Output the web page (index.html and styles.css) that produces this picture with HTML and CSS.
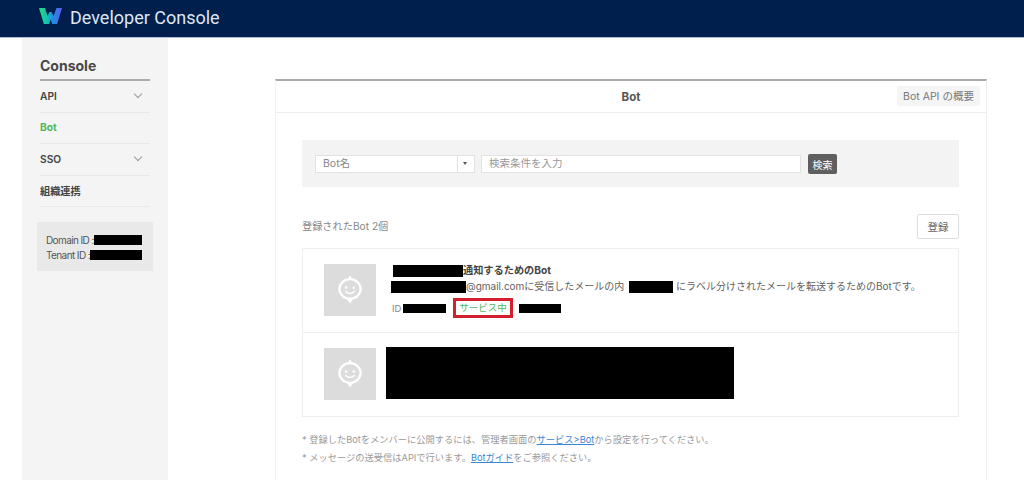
FILE: index.html
```html
<!DOCTYPE html>
<html lang="ja">
<head>
  <meta charset="UTF-8" />
  <meta name="viewport" content="width=device-width, initial-scale=1" />
  <title>Developer Console</title>
  <link rel="stylesheet" href="styles.css">
</head>
<body>
  <svg class="defs" width="0" height="0" aria-hidden="true">
    <defs>
      <linearGradient id="logo-grad" x1="0" y1="0" x2="1" y2="0">
        <stop offset="0" stop-color="#2ad97c" />
        <stop offset="0.35" stop-color="#16c0b4" />
        <stop offset="0.6" stop-color="#1f8fe6" />
        <stop offset="1" stop-color="#6257ea" />
      </linearGradient>
      <symbol id="bot-face" viewBox="0 0 26 28">
        <circle cx="13" cy="1.3" r="1.3" fill="#fff" />
        <ellipse cx="13" cy="13" rx="10.6" ry="9.8" fill="none" stroke="#fff" stroke-width="2.2" />
        <path d="M9.8 23l3.2 4.4 3.2-4.4z" fill="#fff" />
        <circle cx="9.2" cy="11.6" r="1.3" fill="#fff" />
        <circle cx="16.8" cy="11.6" r="1.3" fill="#fff" />
        <path d="M8.8 15.4c2.3 2.7 6.1 2.7 8.4 0" fill="none" stroke="#fff" stroke-width="1.5" stroke-linecap="round" />
      </symbol>
    </defs>
  </svg>

  <header class="topbar">
    <svg class="logo" viewBox="0 0 23 16.5" aria-hidden="true">
      <path d="M0 0h6l2.5 8 2-4h2l2 4L17.5 0H23l-5 16.5h-4.5l-1.8-5-1.7 5H5z" fill="url(#logo-grad)" />
    </svg>
    <span class="topbar-title">Developer Console</span>
  </header>

  <div class="layout">
    <aside class="sidebar">
      <h2 class="sidebar-title">Console</h2>
      <ul class="side-menu">
        <li class="side-item">API <span class="chevron"></span></li>
        <li class="side-item active">Bot</li>
        <li class="side-item">SSO <span class="chevron"></span></li>
        <li class="side-item">組織連携</li>
      </ul>
      <div class="id-box">
        <div class="id-line">Domain ID : <span class="mask mask-domain"></span></div>
        <div class="id-line">Tenant ID : <span class="mask mask-tenant"></span></div>
      </div>
    </aside>

    <main class="panel">
      <div class="panel-head">
        <h1 class="panel-title">Bot</h1>
        <a class="overview-link">Bot API の概要</a>
      </div>

      <div class="panel-body">
        <div class="search-box">
          <div class="select">
            <span class="select-value">Bot名</span>
            <span class="select-arrow"></span>
          </div>
          <div class="search-input">検索条件を入力</div>
          <button class="search-btn">検索</button>
        </div>

        <div class="list-head">
          <span class="count">登録されたBot 2個</span>
          <button class="register-btn">登録</button>
        </div>

        <div class="bot-list">
          <div class="bot-row">
            <div class="avatar"><svg class="bot-icon"><use href="#bot-face" /></svg></div>
            <div class="bot-info">
              <div class="bot-name"><span class="mask mask-name"></span>通知するためのBot</div>
              <div class="bot-desc"><span class="mask mask-mail"></span>@gmail.comに受信したメールの内 <span class="mask mask-label"></span> にラベル分けされたメールを転送するためのBotです。</div>
              <div class="bot-meta">
                <span class="bot-id">ID</span><span class="mask mask-id"></span>
                <span class="status">サービス中</span>
                <span class="mask mask-id2"></span>
              </div>
            </div>
          </div>
          <div class="bot-row">
            <div class="avatar"><svg class="bot-icon"><use href="#bot-face" /></svg></div>
            <div class="mask mask-block"></div>
          </div>
        </div>

        <p class="note">* 登録したBotをメンバーに公開するには、管理者画面の<a class="note-link">サービス&gt;Bot</a>から設定を行ってください。</p>
        <p class="note">* メッセージの送受信はAPIで行います。<a class="note-link">Botガイド</a>をご参照ください。</p>
      </div>
    </main>
  </div>
</body>
</html>
```

FILE: styles.css
```css
* { box-sizing: border-box; }
html, body {
  height: 100%;
  overflow: hidden;
}
body {
  margin: 0;
  font-family: 'Inter', 'Noto Sans CJK JP', sans-serif;
  background-color: #fff;
  color: #555;
  display: flex;
  flex-direction: column;
}
.defs { position: absolute; }
ul { list-style: none; margin: 0; padding: 0; }
button { font-family: inherit; }

.topbar {
  flex: none;
  height: 38px;
  padding-left: 39px;
  display: flex;
  align-items: center;
  gap: 8px;
  background-color: #001f4d;
  border-bottom: 1px solid #a9bdd8;
}
.logo { width: 23px; height: 16.5px; margin-top: -5px; }
.topbar-title {
  color: #dfe6f2;
  font-family: 'Roboto', sans-serif;
  font-size: 18px;
  margin-top: -3px;
}

.layout {
  flex: 1;
  display: flex;
  padding-left: 22px;
  min-height: 0;
}

.sidebar {
  flex: none;
  width: 146px;
  padding: 18px 18px 0 15px;
  background-color: #f4f4f4;
}
.sidebar-title {
  margin: 0 0 0 3px;
  height: 25px;
  font-size: 14px;
  line-height: 20px;
  font-weight: 700;
  color: #484848;
  border-bottom: 2px solid #aaa;
}
.side-menu { margin-left: 3px; }
.side-item {
  height: 31.5px;
  padding: 0 9px 1px 0;
  display: flex;
  align-items: center;
  justify-content: space-between;
  font-size: 10.2px;
  font-weight: 600;
  color: #444;
  border-bottom: 1px solid #e9e9e9;
}
.side-item.active { color: #4cb85c; font-weight: 700; }
.chevron {
  width: 6px;
  height: 6px;
  margin-top: -3px;
  border-right: 1px solid #999;
  border-bottom: 1px solid #999;
  transform: rotate(45deg);
}
.id-box {
  margin-top: 15px;
  width: 116px;
  height: 49px;
  padding: 10px 11px 0 9px;
  background-color: #e9e9e9;
}
.id-line {
  display: flex;
  align-items: center;
  justify-content: space-between;
  height: 15px;
  font-size: 10px;
  letter-spacing: -0.6px;
  color: #555;
  white-space: nowrap;
}

.mask { display: inline-block; background-color: #000; vertical-align: middle; }
.mask-domain { width: 49px; height: 10px; }
.mask-tenant { width: 52px; height: 10px; }
.mask-name { width: 70px; height: 12px; margin-left: 1px; }
.mask-mail { width: 75px; height: 12px; margin-left: -1px; }
.mask-label { width: 44px; height: 12px; margin: 0 0 0 2px; }
.mask-id { width: 43px; height: 9px; }
.mask-id2 { width: 42px; height: 9px; margin-left: 6px; }
.mask-block { width: 348px; height: 52px; margin: -1px 0 0 10px; }

.panel {
  flex: none;
  width: 712px;
  margin: 41px 0 0 107px;
  border-top: 2px solid #aaa;
  border-right: 1px solid #eee;
  border-left: 1px solid #f2f2f2;
}
.panel-head {
  height: 32px;
  position: relative;
  display: flex;
  align-items: center;
  justify-content: center;
  border-bottom: 1px solid #eee;
}
.panel-title {
  margin: 0;
  font-size: 11.5px;
  font-weight: 700;
  color: #555;
}
.overview-link {
  position: absolute;
  right: 6px;
  top: 5px;
  height: 20px;
  width: 83px;
  line-height: 21px;
  text-align: center;
  font-size: 10.5px;
  color: #777;
  background-color: #f5f5f5;
}

.panel-body { padding: 27px 27px 0 26px; }

.search-box {
  height: 47px;
  padding: 15px 13px 0 13px;
  display: flex;
  align-items: flex-start;
  background-color: #f3f3f3;
}
.select {
  width: 160px;
  height: 18px;
  display: flex;
  background-color: #fff;
  border: 1px solid #e2e2e2;
  font-size: 10.5px;
  line-height: 16px;
  color: #888;
}
.select-value { flex: 1; padding-left: 7px; border-right: 1px solid #e2e2e2; }
.select-arrow {
  width: 16px;
  position: relative;
}
.select-arrow::after {
  content: "";
  position: absolute;
  left: 5px;
  top: 6px;
  border-top: 3px solid #555;
  border-left: 2.5px solid transparent;
  border-right: 2.5px solid transparent;
}
.search-input {
  width: 320px;
  height: 18px;
  margin-left: 6px;
  padding-left: 7px;
  background-color: #fff;
  border: 1px solid #e2e2e2;
  font-size: 10.5px;
  line-height: 16px;
  color: #999;
}
.search-btn {
  width: 29px;
  height: 20px;
  margin: -1px 0 0 7px;
  padding: 0;
  border: none;
  border-radius: 2px;
  background-color: #5f5f5f;
  color: #fff;
  font-size: 10px;
}

.list-head {
  height: 61px;
  padding: 27px 0 0;
  display: flex;
  justify-content: space-between;
  align-items: flex-start;
}
.count {
  font-size: 10.2px;
  line-height: 25px;
  color: #888;
}
.register-btn {
  width: 42px;
  height: 25px;
  padding: 0;
  background-color: #fff;
  border: 1px solid #ddd;
  border-radius: 2px;
  color: #666;
  font-size: 10.5px;
}

.bot-list {
  width: 657px;
  border: 1px solid #eee;
}
.bot-row {
  height: 84px;
  padding: 15px 0 0 21px;
  display: flex;
  align-items: flex-start;
  border-bottom: 1px solid #eee;
}
.bot-row:last-child { height: 83px; border-bottom: none; }
.avatar {
  flex: none;
  width: 52px;
  height: 52px;
  display: flex;
  align-items: center;
  justify-content: center;
  background-color: #dcdcdc;
}
.bot-icon { width: 26px; height: 28px; }
.bot-info { margin-left: 16px; }
.bot-name {
  height: 15px;
  font-size: 10.2px;
  line-height: 13px;
  font-weight: 700;
  color: #444;
}
.bot-desc {
  height: 16px;
  font-size: 10px;
  line-height: 15px;
  color: #5f5f5f;
  white-space: nowrap;
}
.bot-meta {
  margin-top: 3px;
  height: 20px;
  display: flex;
  align-items: center;
}
.bot-id { font-size: 9.5px; color: #888; width: 11px; }
.status {
  margin-left: 7px;
  width: 60px;
  height: 20px;
  border: 3px solid #d3202c;
  text-align: center;
  font-size: 9.5px;
  line-height: 14px;
  color: #4cb85c;
}

.note {
  margin: 0;
  font-size: 9.25px;
  line-height: 18px;
  color: #999;
  white-space: nowrap;
}
.bot-list + .note { margin-top: 14px; }
.note-link { color: #3b86d8; text-decoration: underline; }
```
